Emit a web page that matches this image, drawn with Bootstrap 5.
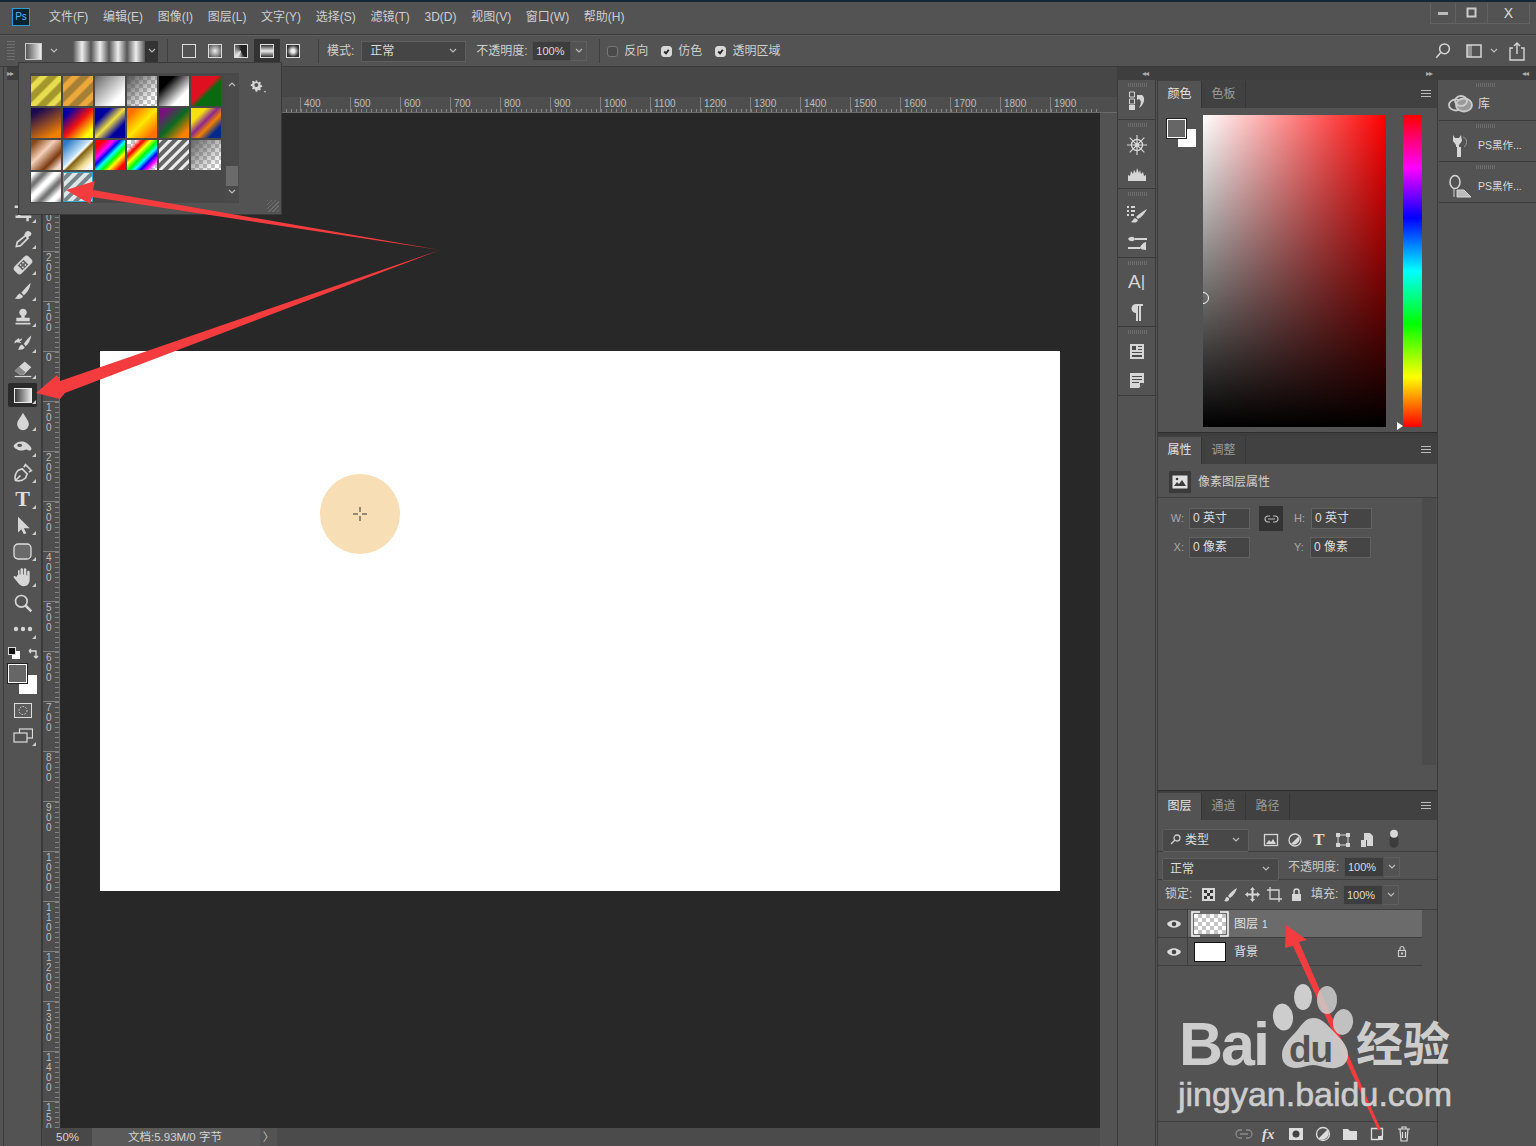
<!DOCTYPE html>
<html lang="zh-CN">
<head>
<meta charset="UTF-8">
<title>Photoshop</title>
<link href="https://cdn.jsdelivr.net/npm/bootstrap@5.3.0/dist/css/bootstrap.min.css" rel="stylesheet">
<style>
:root { --bg:#535353; --dark:#434343; --line:#3a3a3a; --field:#454545; --txt:#cfcfcf; --chk:repeating-conic-gradient(#c4c4c4 0 25%,#fff 0 50%) 0 0/8px 8px; }
html,body { margin:0; height:100%; overflow:hidden; background:var(--bg); }
body { font:12px/1.2 "Liberation Sans","Noto Sans CJK SC",sans-serif; color:var(--txt); }
svg { display:block; flex:none; }
.ic { fill:#d6d6d6; }
.ol { fill:none; stroke:#d6d6d6; stroke-width:2; }
.app { width:1536px; height:1146px; }

/* menu and options */
.menubar { height:34px; flex:none; border-top:2px solid #14283a; padding:0 0 2px 12px; }
.ps-logo { width:18px; height:18px; background:#0a2333; border:1px solid #2e9bd6; color:#4fb6ee; font-size:10px; line-height:16px; text-align:center; margin-right:19px; }
.menubar .menu { gap:14.7px; }
.winbtns { width:100px; height:21px; margin-left:auto; margin-right:6px; margin-bottom:8px; border:1px solid #626262; border-top:0; }
.winbtns div { height:100%; border-right:1px solid #626262; }
.wb1 { width:26px; } .wb2 { width:32px; }
.winbtns .wb3 { width:42px; border:0; color:#ddd; font-size:14px; text-align:center; line-height:20px; }
.optbar { height:33px; flex:none; padding-top:1px; border-top:1px solid var(--line); border-bottom:1px solid var(--line); box-shadow:inset 0 1px #5e5e5e; }
.grip { width:8px; height:20px; margin-left:7px; background:repeating-linear-gradient(to bottom,#707070 0 1px,transparent 1px 3px); }
.opt-div { width:1px; height:24px; background:#3f3f3f; }
.gt { width:26px; height:24px; }
.gt.on { background:#333; }
.gt i { display:block; width:14px; height:14px; border:1px solid #ddd; }
.g-rad { background:radial-gradient(#eee,#444); }
.g-ang { background:conic-gradient(#222 0 40%,#eee 60%,#222); }
.g-ref { background:linear-gradient(#333,#eee,#333); }
.g-dia { background:radial-gradient(#eee 20%,#333 70%); }
.preset { width:17px; height:17px; margin-left:10px; border:1px solid #ccc; background:linear-gradient(90deg,#555,#eee); }
.chev { fill:none; stroke:#bbb; stroke-width:1.2; }
.gradbar { width:72px; height:21px; margin-left:7px; background:repeating-linear-gradient(90deg,#555 0,#eee 9px,#555 18px); }
.gradchev { width:13px; height:21px; background:#333; margin-right:9px; }
.fld { background:var(--field); border:1px solid #5f5f5f; color:#ddd; font-size:12px; padding-left:8px; }
.sel { height:21px; }
.pct { width:39px; height:20px; background:#3d3d3d; border:1px solid #505050; font-size:11px; line-height:18px; padding-left:3px; color:#ddd; }
.pctc { width:16px; height:20px; border:1px solid #5f5f5f; border-left:0; }
.opt-ck { width:11px; height:11px; margin:0 6px 0 0; background-color:#4a4a4a; border:1px solid #777; border-radius:2px; flex:none; }
.opt-ck:checked[type=checkbox] { background-color:#d8d8d8; border-color:#d8d8d8; background-image:url("data:image/svg+xml,<svg xmlns='http://www.w3.org/2000/svg' viewBox='0 0 20 20'><path fill='none' stroke='%23222' stroke-width='4' d='m5 10 4 4 6-8'/></svg>"); }
.opt-mlab { margin-right:7px; }
.opt-mode { width:105px; }
.opt-op { width:52px; margin-left:10px; margin-right:4px; }
.opt-d3 { margin:0 7px 0 4px; }
.opt-l { margin-right:13px; }
.opt-right { padding-right:10px; }
.opt-r1 { margin-left:14px; }
.opt-r2 { margin:0 6px 0 8px; }
.opt-r3 { margin-left:4px; }

/* body of window */
.work { height:1079px; min-height:0; }
.strip { height:13px; background:#3e3e3e; color:#aaa; font-size:8px; line-height:13px; letter-spacing:-1px; }
.tools { width:39px; padding-left:3px; border-left:1px solid var(--line); margin-left:3px; border-right:1px solid #3a3a3a; }
.tool-gap { height:16px; }
.tool { width:29px; height:26px; margin-left:1px; position:relative; }
.tool::after { content:""; position:absolute; right:1px; bottom:3px; border:2px solid transparent; border-right-color:#ccc; border-bottom-color:#ccc; }
.tool.nt::after { display:none; }
.tool.on { background:#2b2b2b; height:24px; margin:1px 0 1px 1px; border-radius:2px; }
.t-txt { font:700 22px/1 "Liberation Serif",serif; color:#ddd; }
.swatch-row { height:22px; margin-left:1px; gap:4px; }
.fgbg { width:29px; height:30px; margin:0 0 3px 1px; }
.fgbg .bg { right:0; bottom:0; width:18px; height:19px; background:#fff; }
.fgbg .fg { left:0; top:0; width:19px; height:19px; background:#666; border:1px solid #fff; outline:1px solid #222; }

/* doc area */
.doc { width:1075px; min-width:0; }
.doctabs { height:30px; background:#474747; flex:none; }
.hruler { height:16px; background:#4e4e4e; color:#bdbdbd; font-size:10px; border-bottom:1px solid #6a6a6a; }
.hruler .corner { width:18px; flex:none; }
.hruler .lead { width:40px; flex:none; }
.hruler .c { width:50px; flex:none; padding-left:3px; line-height:14px; border-left:1px solid #808080; background:repeating-linear-gradient(90deg,#858585 0 1px,transparent 1px 5px) 0 100%/100% 3px no-repeat; }
.doc-mid { min-height:0; }
.vruler { width:18px; flex:none; background:#4e4e4e; color:#bdbdbd; font-size:10px; line-height:10px; overflow:hidden; border-left:1px solid #3a3a3a; border-right:1px solid #6a6a6a; }
.vruler .lead { height:38px; }
.vruler .c { height:50px; padding:1px 0 0 3px; border-top:1px solid #808080; background:repeating-linear-gradient(#858585 0 1px,transparent 1px 5px) 100% 0/4px 100% no-repeat; }
.vruler b { display:block; font-weight:400; }
.pasteboard { background:#282828; padding:238px 0 0 40px; min-width:0; width:1040px; }
.sheet { width:960px; height:540px; background:#fff; }
.dab { left:220px; top:123px; width:80px; height:80px; border-radius:50%; background:#f8deb5; }
.vscroll { flex:1; background:#535353; }
.status { height:18px; background:#535353; color:#d4d4d4; font-size:11.5px; line-height:18px; }
.st-zoom { width:50px; padding-left:14px; background:#484848; }
.st-doc { width:168px; padding-left:36px; background:#5a5a5a; }
.st-go { width:17px; color:#bbb; }
.st-rest { width:823px; background:#4b4b4b; }

/* docks */
.rightside { width:419px; }
.strip-r { padding:0 8px 0 25px; }
.strip-m { margin-left:auto; margin-right:90px; }
.iconrow { min-height:0; }
.dock { width:39px; border-left:1px solid var(--line); border-right:1px solid var(--line); margin-right:1px; flex:none; }
.dock-grp { border-bottom:1px solid #3a3a3a; padding-top:10px; position:relative; }
.dock-grp::before { content:""; position:absolute; left:10px; top:3px; width:19px; height:4px; background:repeating-linear-gradient(90deg,#6d6d6d 0 1px,transparent 1px 2px); }
.dg1 { height:40px; } .dg2 { height:69px; }
.dock-i { height:29px; }
.dk-txt { font-size:19px; color:#d6d6d6; }
.dk-bar { font-size:17px; font-weight:300; }
.panels { width:281px; flex:none; border-left:1px solid var(--line); border-right:1px solid var(--line); }
.ptabs { height:28px; background:#414141; color:#9a9a9a; font-size:12px; flex:none; }
.ptabs .tb { width:44px; text-align:center; line-height:27px; border-right:1px solid #353535; }
.ptabs .tb.on { background:var(--bg); color:#e4e4e4; width:44px; }
.burger { width:10px; height:8px; margin:0 6px 0 auto; background:repeating-linear-gradient(#bbb 0 1px,transparent 1px 3px); }
.sep { height:4px; background:#3d3d3d; flex:none; border-top:1px solid #2f2f2f; }
.sep-thin { height:2px; }
.pcolor { height:324px; padding:7px 0 0 9px; }
.cfg { width:30px; height:30px; margin:4px 6px 0 0; }
.cfg .b { left:11px; top:10px; width:18px; height:18px; background:#fff; }
.cfg .f { left:0; top:0; width:19px; height:19px; background:#666; border:1px solid #fff; outline:1px solid #222; }
.field { width:183px; height:312px; background:linear-gradient(transparent,#000),linear-gradient(90deg,#fff,#f00); margin-right:17px; overflow:hidden; }
.cmark { left:-6px; top:177px; width:12px; height:12px; border:1px solid #fff; border-radius:50%; }
.hue { width:19px; height:312px; background:linear-gradient(#f00,#f0f 17%,#00f 33%,#0ff 50%,#0f0 67%,#ff0 84%,#f00); }
.huemark { left:-6px; bottom:-3px; border:4px solid transparent; border-left:6px solid #fff; border-right:0; }
.pprops { height:354px; }
.prow1 { height:34px; padding:3px 0 0 11px; gap:7px; border-bottom:1px solid #3f3f3f; flex:none; }
.thumbbox { width:22px; height:22px; background:#3a3a3a; }
.prop-body { min-height:0; }
.prop-fields { width:264px; padding-top:6px; color:#a9a9a9; font-size:11px; }
.prop-lane { width:14px; height:267px; background:#4b4b4b; }
.frow { height:29px; }
.frow .lb { width:31px; text-align:right; padding-right:5px; }
.fi { width:61px; height:21px; background:#454545; border:1px solid #626262; padding-left:3px; color:#ddd; font-size:12px; line-height:19px; }
.fi-y { margin-left:-1px; }
.linkb { width:24px; height:25px; background:#333; margin:0 11px 0 9px; }
.hl { width:17px; padding-right:5px; }
.player { min-height:0; flex:1; }
.lr { border-bottom:1px solid #3d3d3d; flex:none; }
.lay-sel { height:23px; background:#484848; border:1px solid #5f5f5f; border-radius:2px; color:#ddd; padding-left:7px; }
.lay-s1 { width:87px; }
.lay-s2 { width:117px; margin-top:4px; }
.filter { height:32px; padding:9px 0 0 4px; }
.filter .ics { margin-left:14px; gap:8px; }
.filter .ics svg { width:16px; height:16px; }
.filter .ics .lay-togg { width:14px; height:20px; margin-top:-2px; }
.lay-t { font-size:17px; line-height:16px; width:16px; text-align:center; }
.blend { height:28px; padding:3px 0 0 4px; }
.lay-op { margin:0 4px 0 9px; color:#c8c8c8; width:52px; }
.lay-pct { width:40px; }
.lockrow { height:30px; padding-left:7px; }
.lockrow > svg { width:15px; height:15px; margin-right:7px; }
.lock-l { width:28px; margin-right:8px; }
.lay-fillt { margin-right:4px; width:28px; }
.lrow { width:264px; height:28px; border-bottom:1px solid #3d3d3d; flex:none; }
.lrow.sel-l .ltext { background:#6b6b6b; }
.eye { width:30px; height:100%; padding-left:2px; border-right:1px solid #3d3d3d; }
.ltext { flex:1; height:100%; padding-left:6px; color:#e0e0e0; }
.ltext span { padding-top:2px; }
.lth { width:32px; height:20px; margin-right:8px; position:relative; }
.lth.ck { background:var(--chk); }
.lth.wh { background:#fff; border:1px solid #111; }
.brk { position:absolute; left:-3px; top:-3px; }
.lnum { font-size:10px; margin-left:4px; }
.lock-bg { margin-right:14px; }
.lfoot { height:25px; border-top:1px solid #3d3d3d; flex:none; margin-top:auto; padding-left:77px; gap:9px; }
.lfoot svg { width:18px; height:18px; }
.lf-fx { width:16px; font:italic 700 15px/18px "Liberation Serif",serif; color:#ddd; }
.rdock { flex:1; margin-left:1px; }
.rd { height:41px; border-bottom:1px solid var(--line); padding:8px 0 0 9px; gap:5px; position:relative; font-size:10.5px; color:#d8d8d8; }
.rd::before { content:""; position:absolute; left:37px; top:3px; width:19px; height:4px; background:repeating-linear-gradient(90deg,#6d6d6d 0 1px,transparent 1px 2px); }
.rd svg { width:25px; height:25px; }
.rd-lib { font-size:12px; }

/* gradient popup */
.gpop { left:18px; top:62px; width:264px; height:153px; background:#535353; border:1px solid #3a3a3a; padding:10px 0 0 11px; }
.gwell { width:209px; height:130px; background:#484848; padding:3px 0 0 1px; }
.ggrid { display:grid; grid-template-columns:repeat(6,30px); grid-auto-rows:30px; gap:2px; width:190px; }
.sb { width:14px; height:126px; margin-left:4px; background:#4a4a4a; }
.sb .thumb { height:20px; width:12px; margin:78px 0 0 1px; background:#6a6a6a; }
.sb svg { margin:6px 0 0 3px; }
.sb .thumb + svg { margin-top:3px; }
.gear { margin:6px 0 0 11px; }
.corner-g { right:2px; bottom:2px; width:12px; height:12px; background:repeating-linear-gradient(135deg,#6d6d6d 0 1px,transparent 1px 3px); }
.s1 { background:repeating-linear-gradient(135deg,#a3962b 0 5px,#e8dc50 7px 11px,#a3962b 13px); }
.s2 { background:repeating-linear-gradient(135deg,#a57f35 0 5px,#eca83a 7px 11px,#a57f35 13px); }
.s3 { background:linear-gradient(135deg,#666,#fff 75%); }
.s4 { background:linear-gradient(135deg,#555,transparent 80%),var(--chk); }
.s5 { background:linear-gradient(135deg,#000 25%,#fff 72%); }
.s6 { background:linear-gradient(135deg,#e01020 45%,#0a6a10 58%); }
.s7 { background:linear-gradient(150deg,#1c0a50 15%,#f08000 85%); }
.s8 { background:linear-gradient(135deg,#0000a8 15%,#f01010 50%,#ffff00 85%); }
.s9 { background:linear-gradient(135deg,#0000a0 25%,#f0e040 50%,#0000a0 75%); }
.s10 { background:linear-gradient(135deg,#ff7000 15%,#ffe800 50%,#ff7000 85%); }
.s11 { background:linear-gradient(135deg,#7a1080 15%,#0a6a20 50%,#ff8000 85%); }
.s12 { background:linear-gradient(135deg,#f5e010 25%,#8a2a90 45%,#f08000 60%,#002a90 80%); }
.s13 { background:linear-gradient(135deg,#8a4a18 10%,#f5d0b8 40%,#7a3a10 70%,#f5d8c8 90%); }
.s14 { background:linear-gradient(135deg,#2a7ac8 10%,#c8e4f8 45%,#fff 49%,#806010 55%,#f0dc90 75%,#fff 90%); }
.s15 { background:linear-gradient(135deg,#f00 15%,#f0f 32%,#00f 42%,#0ff 52%,#0f0 62%,#ff0 72%,#f00 88%); }
.s16 { background:linear-gradient(135deg,transparent 15%,#f00 28%,#ff0 40%,#0f0 52%,#0ff 62%,#00f 72%,#f0f 82%,transparent 92%),var(--chk); }
.s17 { background:repeating-linear-gradient(135deg,#eee 0 2px,#666 3px 6px,#eee 7px); }
.s18 { background:linear-gradient(135deg,#666,transparent 85%),var(--chk); }
.s19 { background:repeating-linear-gradient(135deg,#fff 0 3px,#777 9px 11px,#fff 17px); }
.s20 { background:repeating-linear-gradient(135deg,#dfe6e8 0 3px,#76858a 4px 7px,#dfe6e8 8px); outline:1px solid #3ea6c8; outline-offset:-1px; }

/* overlays */
.overlay { left:0; top:0; pointer-events:none; }
.wm { color:#cdcdcd; white-space:nowrap; pointer-events:none; }
.wm-bai { left:1179px; top:1009px; font:700 61px/70px "Liberation Sans",sans-serif; letter-spacing:-2px; }
.wm-du { left:1289px; top:1031px; font:700 37px/37px "Liberation Sans",sans-serif; color:#535353; letter-spacing:-1px; }
.wm-jy { left:1178px; top:1074px; font-size:34px; line-height:40px; -webkit-text-stroke:.6px #cdcdcd; }
.wm-cn { left:1356px; top:1018px; font-size:47px; line-height:54px; font-weight:700; }
</style>
</head>
<body>
<div class="app position-relative d-flex flex-column">

  <!-- title + menu -->
  <div class="menubar d-flex align-items-center">
    <div class="ps-logo flex-shrink-0">Ps</div>
    <div class="menu d-flex">
      <span>文件(F)</span><span>编辑(E)</span><span>图像(I)</span><span>图层(L)</span><span>文字(Y)</span><span>选择(S)</span><span>滤镜(T)</span><span>3D(D)</span><span>视图(V)</span><span>窗口(W)</span><span>帮助(H)</span>
    </div>
    <div class="winbtns d-flex align-items-center">
      <div class="wb1 d-flex align-items-center justify-content-center"><svg width="10" height="4"><rect y="1" width="10" height="3" fill="#bbb"/></svg></div>
      <div class="wb2 d-flex align-items-center justify-content-center"><svg width="11" height="11"><rect x="1.5" y="1.5" width="8" height="8" fill="none" stroke="#ccc" stroke-width="2"/></svg></div>
      <div class="wb3">X</div>
    </div>
  </div>

  <!-- options bar -->
  <div class="optbar d-flex align-items-center">
    <div class="grip"></div>
    <div class="preset"></div>
    <svg class="chev mx-2" width="8" height="6" viewBox="0 0 8 6"><path d="m1 1 3 3 3-3"/></svg>
    <div class="gradbar"></div>
    <div class="gradchev d-flex align-items-center justify-content-center"><svg class="chev" width="8" height="6" viewBox="0 0 8 6"><path d="m1 1 3 3 3-3"/></svg></div>
    <div class="opt-div me-1"></div>
    <div class="d-flex ms-1 me-2">
      <div class="gt d-flex align-items-center justify-content-center"><i class="bg-transparent"></i></div>
      <div class="gt d-flex align-items-center justify-content-center"><i class="g-rad"></i></div>
      <div class="gt d-flex align-items-center justify-content-center"><i class="g-ang"></i></div>
      <div class="gt on d-flex align-items-center justify-content-center"><i class="g-ref"></i></div>
      <div class="gt d-flex align-items-center justify-content-center"><i class="g-dia"></i></div>
    </div>
    <div class="opt-div ms-1 me-2"></div>
    <span class="opt-mlab">模式:</span>
    <div class="fld sel d-flex align-items-center justify-content-between pe-2 opt-mode">正常<svg class="chev" width="8" height="6" viewBox="0 0 8 6"><path d="m1 1 3 3 3-3"/></svg></div>
    <span class="opt-op">不透明度:</span>
    <div class="pct">100%</div>
    <div class="pctc d-flex align-items-center justify-content-center me-2"><svg class="chev" width="8" height="6" viewBox="0 0 8 6"><path d="m1 1 3 3 3-3"/></svg></div>
    <div class="opt-div opt-d3"></div>
    <input class="form-check-input opt-ck mt-0" type="checkbox"><span class="opt-l">反向</span>
    <input class="form-check-input opt-ck mt-0" type="checkbox" checked><span class="opt-l">仿色</span>
    <input class="form-check-input opt-ck mt-0" type="checkbox" checked><span>透明区域</span>
    <div class="ms-auto d-flex align-items-center opt-right">
      <svg class="ol" width="18" height="18" viewBox="0 0 24 24"><circle cx="14" cy="9" r="6.5"/><path d="m9 14-6 7"/></svg>
      <svg class="opt-r1" width="16" height="16" viewBox="0 0 16 16"><path d="M1 2h14v12H1z" fill="none" stroke="#d6d6d6" stroke-width="1.5"/><rect x="1" y="2" width="5" height="12" fill="#d6d6d6" opacity=".5"/></svg>
      <svg class="chev opt-r2" width="8" height="6" viewBox="0 0 8 6"><path d="m1 1 3 3 3-3"/></svg>
      <svg class="ol opt-r3" width="18" height="20" viewBox="0 0 18 20"><path d="M5 7H2v12h14V7h-3M9 13V2M6 5l3-3 3 3" stroke-width="1.4"/></svg>
    </div>
  </div>

  <div class="work d-flex">
    <!-- tools -->
    <div class="tools flex-shrink-0">
      <div class="strip">▸▸</div>
      <div class="tool-gap"></div>
      <div class="tool d-flex align-items-center justify-content-center"></div>
      <div class="tool d-flex align-items-center justify-content-center"></div>
      <div class="tool d-flex align-items-center justify-content-center"></div>
      <div class="tool d-flex align-items-center justify-content-center"></div>
      <div class="tool d-flex align-items-center justify-content-center"><svg class="ic" width="20" height="20" viewBox="0 0 24 24"><path d="M6 2h3v13h13v3h-3v4h-3v-4H3v-3h3V6H2V3h4zM11 6h8v8h-3v-5h-5z"/></svg></div>
      <div class="tool d-flex align-items-center justify-content-center"><svg class="ol" width="20" height="20" viewBox="0 0 24 24"><path d="m15 8 3 3-9 9-5 1 1-5z"/><path d="M13 6l5 5 1-2 2-1c2-2 1-4-1-5s-3-1-5 1l-1 2z" fill="#d6d6d6" stroke="none"/></svg></div>
      <div class="tool d-flex align-items-center justify-content-center"><svg width="20" height="20" viewBox="0 0 24 24"><g transform="rotate(-45 12 12)"><rect x="0" y="6" width="24" height="12" rx="4" fill="#d6d6d6"/><rect x="7" y="8" width="10" height="8" fill="#666"/><circle cx="10" cy="10" r="1" fill="#ddd"/><circle cx="14" cy="10" r="1" fill="#ddd"/><circle cx="10" cy="14" r="1" fill="#ddd"/><circle cx="14" cy="14" r="1" fill="#ddd"/></g></svg></div>
      <div class="tool d-flex align-items-center justify-content-center"><svg class="ic" width="20" height="20" viewBox="0 0 24 24"><path d="M21 2c-3 3-8 8-11 12l3 3c4-3 8-9 8-15zM8 15c-3 1-3 4-6 6 4 1 9 1 10-3z"/></svg></div>
      <div class="tool d-flex align-items-center justify-content-center"><svg class="ic" width="20" height="20" viewBox="0 0 24 24"><path d="M12 2a4.500 4.500 0 0 0-2 8.500V13H4v4h16v-4h-6v-2.500A4.500 4.500 0 0 0 12 2zM3 19h18v2H3z"/></svg></div>
      <div class="tool d-flex align-items-center justify-content-center"><svg class="ic" width="20" height="20" viewBox="0 0 24 24"><path d="M22 3c-3 2-6 6-9 10l2 3c4-3 6-8 7-13zM11 14c-3 0-3 3-5 6 3 0 7 0 8-3zM2 10l5-4 1 2 3-2-1 3-2 1 2 2-6-1-2 2z"/></svg></div>
      <div class="tool d-flex align-items-center justify-content-center"><svg width="20" height="20" viewBox="0 0 24 24"><path d="m14 3 8 7-9 9H8l-6-5z" fill="#d6d6d6"/><path d="m7 9 8 7-3 3H8l-6-5z" fill="#888"/><path d="M2 21h20" stroke="#d6d6d6" stroke-width="1.500"/></svg></div>
      <div class="tool on d-flex align-items-center justify-content-center"><svg width="18" height="15"><defs><linearGradient id="tg"><stop stop-color="#333"/><stop offset="1" stop-color="#eee"/></linearGradient></defs><rect x=".5" y=".5" width="17" height="14" fill="url(#tg)" stroke="#eee"/></svg></div>
      <div class="tool d-flex align-items-center justify-content-center"><svg class="ic" width="20" height="20" viewBox="0 0 24 24"><path d="M12 2c3 6 7 9 7 14a7 7 0 0 1-14 0c0-5 4-8 7-14z"/></svg></div>
      <div class="tool d-flex align-items-center justify-content-center"><svg width="22" height="20" viewBox="0 0 24 24"><path d="M1 10c3-5 11-6 15-3 3 2 7 6 6 8-1 2-3 1-6 0-3 1-8 2-11 0-2-1-5-3-4-5z" fill="#d6d6d6"/><ellipse cx="8" cy="10" rx="3" ry="2" fill="#555"/></svg></div>
      <div class="tool d-flex align-items-center justify-content-center"><svg class="ol" width="20" height="20" viewBox="0 0 24 24"><path d="M3 21c-1-4 0-9 3-12l5-2 6 6-2 5c-3 3-8 4-12 3zm0 0 6-6"/><path d="m13 5 2-3 7 7-3 2" /></svg></div>
      <div class="tool d-flex align-items-center justify-content-center"><span class="t-txt">T</span></div>
      <div class="tool d-flex align-items-center justify-content-center"><svg class="ic" width="20" height="20" viewBox="0 0 24 24"><path d="m6 2 14 14h-7l3 6-3 1-3-6-4 4z"/></svg></div>
      <div class="tool d-flex align-items-center justify-content-center"><svg width="19" height="17"><rect x="1" y="1" width="17" height="15" rx="4" fill="#6a6a6a" stroke="#ddd" stroke-width="1.300"/></svg></div>
      <div class="tool d-flex align-items-center justify-content-center"><svg class="ic" width="20" height="20" viewBox="0 0 24 24"><path d="M6 9V5c0-2 2-2 2 0v4h1V3c0-2 3-2 3 0v6h1V3c0-2 3-2 3 0v7h1V6c0-2 3-2 3 0v9c0 5-3 8-7 8-3 0-5-1-7-4l-5-6c-1-2 1-3 3-1z"/></svg></div>
      <div class="tool nt d-flex align-items-center justify-content-center"><svg class="ol" width="20" height="20" viewBox="0 0 24 24"><circle cx="10" cy="10" r="7"/><path d="m15 15 7 7" stroke-width="3"/></svg></div>
      <div class="tool d-flex align-items-center justify-content-center"><svg class="ic" width="20" height="6" viewBox="0 0 20 6"><circle cx="3" cy="3" r="2.200"/><circle cx="10" cy="3" r="2.200"/><circle cx="17" cy="3" r="2.200"/></svg></div>
      <div class="swatch-row d-flex align-items-center">
        <svg width="12" height="12"><rect x="4" y="4" width="8" height="8" fill="#fff"/><rect x=".5" y=".5" width="7" height="7" fill="#111" stroke="#ddd"/></svg>
        <svg class="ms-1" width="13" height="13" viewBox="0 0 13 13"><path d="M1 4h7v7M1 4l2-2M1 4l2 2M8 11l-2-2M8 11l2-2" fill="none" stroke="#ddd" stroke-width="1.300"/></svg>
      </div>
      <div class="fgbg position-relative"><div class="bg position-absolute"></div><div class="fg position-absolute"></div></div>
      <div class="tool nt d-flex align-items-center justify-content-center"><svg width="18" height="15"><rect x=".5" y=".5" width="17" height="14" fill="#5c5c5c" stroke="#ddd"/><circle cx="9" cy="7.500" r="4" fill="none" stroke="#ddd" stroke-dasharray="1.500 1.500"/></svg></div>
      <div class="tool d-flex align-items-center justify-content-center"><svg width="20" height="16"><rect x="6.500" y="1" width="13" height="9" fill="none" stroke="#ddd" stroke-width="1.200"/><rect x="1" y="5" width="13" height="9" fill="#535353" stroke="#ddd" stroke-width="1.200"/></svg></div>
    </div>

    <!-- document -->
    <div class="doc d-flex flex-column flex-shrink-0">
      <div class="doctabs"></div>
      <div class="hruler d-flex flex-shrink-0 overflow-hidden" id="hruler"><div class="corner"></div><div class="lead"></div></div>
      <div class="doc-mid d-flex flex-grow-1">
        <div class="vruler" id="vruler"><div class="lead"></div></div>
        <div class="pasteboard">
          <div class="sheet position-relative">
            <div class="dab position-absolute d-flex align-items-center justify-content-center">
              <svg width="14" height="14" viewBox="0 0 14 14"><path d="M7 0v5M7 9v5M0 7h5M9 7h5" stroke="#333" stroke-width="1"/></svg>
            </div>
          </div>
        </div>
        <div class="vscroll"></div>
      </div>
      <div class="status d-flex flex-shrink-0">
        <div class="st-zoom flex-shrink-0">50%</div>
        <div class="st-doc flex-shrink-0">文档:5.93M/0 字节</div>
        <div class="st-go flex-shrink-0 d-flex align-items-center justify-content-center">〉</div>
        <div class="st-rest"></div>
      </div>
    </div>

    <!-- right side -->
    <div class="rightside d-flex flex-column flex-shrink-0">
      <div class="strip strip-r d-flex flex-shrink-0"><span>◂◂</span><span class="strip-m">▸▸</span><span>◂◂</span></div>
      <div class="iconrow d-flex flex-grow-1">
        <div class="dock">
          <div class="dock-grp dg1 d-flex justify-content-center"><svg width="18" height="20" viewBox="0 0 18 20"><path d="M1.500 2h5v5h-5zM1.500 9h5v5h-5z" fill="none" stroke="#d6d6d6"/><rect x="1" y="15" width="6" height="5" fill="#d6d6d6"/><path d="M9 5h5c4 3 2 10-3 13 2-4 3-7 0-9l-2 1z" fill="#d6d6d6"/></svg></div>
          <div class="dock-grp dg2">
            <div class="dock-i d-flex align-items-center justify-content-center"><svg width="22" height="22" viewBox="0 0 24 24"><path d="M12 1v22M1 12h22M4 4l16 16M20 4 4 20" stroke="#d6d6d6" stroke-width="1.300"/><circle cx="12" cy="12" r="6" fill="none" stroke="#d6d6d6" stroke-width="1.500"/><circle cx="12" cy="12" r="2.500" fill="#d6d6d6"/></svg></div>
            <div class="dock-i d-flex align-items-center justify-content-center"><svg width="20" height="14" viewBox="0 0 20 14"><path d="M1 14V8l2 1 1-5 2 3 1-4 2 3 1-5 2 5 1-3 1 4 2-2 1 4 2-1v7z" fill="#d6d6d6"/></svg></div>
          </div>
          <div class="dock-grp dg2">
            <div class="dock-i d-flex align-items-center justify-content-center"><svg width="22" height="20" viewBox="0 0 22 20"><path d="M1 2h2v2H1zM5 2h4v2H5zM1 6h2v2H1zM5 6h4v2H5zM1 10h2v2H1zM5 10h3v2H5zM21 5c-4 2-8 5-11 8l2 2c4-2 7-6 9-10zM9 14c-2 1-2 3-4 4 3 1 6 1 7-2z" fill="#d6d6d6"/></svg></div>
            <div class="dock-i d-flex align-items-center justify-content-center"><svg width="20" height="16" viewBox="0 0 20 16"><path d="M8 3h12v2H8zM1 14h12v-2H1zM1 4c2-3 6-3 7 0-1 3-5 3-7 0zM13 13c0-2 4-6 6-6v8c-2 0-6-1-6-2z" fill="#d6d6d6"/></svg></div>
          </div>
          <div class="dock-grp dg2">
            <div class="dock-i d-flex align-items-center justify-content-center dk-txt">A<span class="dk-bar">|</span></div>
            <div class="dock-i d-flex align-items-center justify-content-center"><svg width="14" height="18" viewBox="0 0 14 18"><path d="M6 1h7v2h-2v15H9V3H8v15H6v-8a4.500 4.500 0 0 1 0-9z" fill="#d6d6d6"/></svg></div>
          </div>
          <div class="dock-grp dg2">
            <div class="dock-i d-flex align-items-center justify-content-center"><svg width="16" height="17" viewBox="0 0 16 17"><path d="M1 1h14v15H1z" fill="#d6d6d6"/><path d="M3 3h4v4H3zM9 3h4v1H9zM9 6h4v1H9zM3 9h10v1H3zM3 12h10v2H3z" fill="#4a4a4a"/></svg></div>
            <div class="dock-i d-flex align-items-center justify-content-center"><svg width="16" height="17" viewBox="0 0 16 17"><path d="M1 1h14v10l-5 5H1z" fill="#d6d6d6"/><path d="M3 4h10v1H3zM3 7h10v1H3zM3 10h7v1H3zM11 15v-4h4" fill="#4a4a4a"/></svg></div>
          </div>
        </div>

        <div class="panels d-flex flex-column">
          <div class="ptabs d-flex align-items-center">
            <div class="tb on">颜色</div><div class="tb">色板</div><div class="burger"></div>
          </div>
          <div class="pcolor d-flex flex-shrink-0">
            <div class="cfg position-relative flex-shrink-0"><div class="b position-absolute"></div><div class="f position-absolute"></div></div>
            <div class="field position-relative"><div class="cmark position-absolute"></div></div>
            <div class="hue position-relative"><div class="huemark position-absolute"></div></div>
          </div>
          <div class="sep"></div>
          <div class="pprops d-flex flex-column flex-shrink-0">
            <div class="ptabs d-flex align-items-center">
              <div class="tb on">属性</div><div class="tb">调整</div><div class="burger"></div>
            </div>
            <div class="prow1 d-flex align-items-center">
              <div class="thumbbox d-flex align-items-center justify-content-center"><svg width="16" height="14" viewBox="0 0 16 14"><rect x=".5" y=".5" width="15" height="13" fill="#e0e0e0"/><path d="M2 11l3-4 2 2 3-4 4 6z" fill="#3a3a3a"/><circle cx="5" cy="4" r="1.300" fill="#3a3a3a"/></svg></div>
              <span>像素图层属性</span>
            </div>
            <div class="prop-body d-flex">
              <div class="prop-fields">
                <div class="frow d-flex align-items-center"><span class="lb">W:</span><div class="fi">0 英寸</div><div class="linkb d-flex align-items-center justify-content-center"><svg width="15" height="8" viewBox="0 0 15 8"><path d="M6 1H4a3 3 0 0 0 0 6h2M9 1h2a3 3 0 0 1 0 6H9M4 4h7" fill="none" stroke="#bbb" stroke-width="1.200"/></svg></div><span class="hl">H:</span><div class="fi">0 英寸</div></div>
                <div class="frow d-flex align-items-center"><span class="lb">X:</span><div class="fi">0 像素</div><div class="linkb invisible"></div><span class="hl">Y:</span><div class="fi fi-y">0 像素</div></div>
              </div>
              <div class="prop-lane"></div>
            </div>
          </div>
          <div class="sep sep-thin"></div>
          <div class="player d-flex flex-column">
            <div class="ptabs d-flex align-items-center">
              <div class="tb on">图层</div><div class="tb">通道</div><div class="tb">路径</div><div class="burger"></div>
            </div>
            <div class="filter lr d-flex align-items-center">
              <div class="lay-sel d-flex align-items-center justify-content-between pe-2 lay-s1"><span class="d-flex align-items-center"><svg class="me-1" width="11" height="11" viewBox="0 0 11 11"><circle cx="7" cy="4" r="3" fill="none" stroke="#ccc" stroke-width="1.300"/><path d="M5 6 1 10" stroke="#ccc" stroke-width="1.500"/></svg>类型</span><svg class="chev" width="8" height="6" viewBox="0 0 8 6"><path d="m1 1 3 3 3-3"/></svg></div>
              <div class="ics d-flex align-items-center">
                <svg viewBox="0 0 16 16"><rect x="1.500" y="2.500" width="13" height="11" fill="none" stroke="#d6d6d6" stroke-width="1.300"/><path d="M3 12l3-4 2 2 2-3 3 5z" fill="#d6d6d6"/></svg>
                <svg viewBox="0 0 16 16"><circle cx="8" cy="8" r="6" fill="none" stroke="#d6d6d6" stroke-width="1.300"/><path d="M12 4A6 6 0 0 1 4 12z" fill="#d6d6d6"/></svg>
                <span class="t-txt lay-t">T</span>
                <svg viewBox="0 0 16 16"><path d="M3 3h10v10H3z" fill="none" stroke="#d6d6d6"/><path d="M1 1h4v4H1zM11 1h4v4h-4zM1 11h4v4H1zM11 11h4v4h-4z" fill="#d6d6d6"/></svg>
                <svg viewBox="0 0 16 16"><path d="M5 1h6l3 3v10H8V8H5zM2 8h5v7H2z" fill="#d6d6d6"/></svg>
                <svg class="ms-1 lay-togg" viewBox="0 0 16 22"><rect x="3" y="6" width="10" height="15" rx="5" fill="#3c3c3c"/><circle cx="8" cy="5" r="4.500" fill="#d8d8d8"/></svg>
              </div>
            </div>
            <div class="blend lr d-flex align-items-center">
              <div class="lay-sel d-flex align-items-center justify-content-between pe-2 lay-s2">正常<svg class="chev" width="8" height="6" viewBox="0 0 8 6"><path d="m1 1 3 3 3-3"/></svg></div>
              <span class="lay-op">不透明度:</span>
              <div class="pct lay-pct">100%</div><div class="pctc d-flex align-items-center justify-content-center"><svg class="chev" width="8" height="6" viewBox="0 0 8 6"><path d="m1 1 3 3 3-3"/></svg></div>
            </div>
            <div class="lockrow lr d-flex align-items-center">
              <span class="lock-l">锁定:</span>
              <svg viewBox="0 0 15 15"><rect x="1" y="1" width="13" height="13" fill="#d6d6d6"/><path d="M3 3h3v3H3zM9 3h3v3H9zM6 6h3v3H6zM3 9h3v3H3zM9 9h3v3H9z" fill="#333"/></svg>
              <svg viewBox="0 0 15 15"><path d="M14 1C10 3 7 6 5 9l2 2c3-2 6-6 7-10zM4 10c-2 0-1 3-3 4 3 1 6 0 5-3z" fill="#d6d6d6"/></svg>
              <svg viewBox="0 0 15 15"><path d="M7.500 0 10 3H8.500v3.500H12V5l3 2.500L12 10V8.500H8.500V12H10l-2.500 3L5 12h1.500V8.500H3V10L0 7.500 3 5v1.500h3.500V3H5z" fill="#d6d6d6"/></svg>
              <svg viewBox="0 0 15 15"><path d="M3 0v12h12M0 3h12v12" fill="none" stroke="#d6d6d6" stroke-width="1.300"/></svg>
              <svg viewBox="0 0 15 15"><path d="M3 7h9v7H3z" fill="#d6d6d6"/><path d="M5 7V4.500a2.500 2.500 0 0 1 5 0V7" fill="none" stroke="#d6d6d6" stroke-width="1.500"/></svg>
              <span class="lay-fillt">填充:</span>
              <div class="pct lay-pct">100%</div><div class="pctc d-flex align-items-center justify-content-center"><svg class="chev" width="8" height="6" viewBox="0 0 8 6"><path d="m1 1 3 3 3-3"/></svg></div>
            </div>
            <div class="lrow sel-l d-flex align-items-center">
              <div class="eye d-flex align-items-center justify-content-center"><svg width="14" height="10" viewBox="0 0 14 10"><path d="M0 5c3-5 11-5 14 0-3 5-11 5-14 0z" fill="#ddd"/><circle cx="7" cy="5" r="2.300" fill="#444"/></svg></div>
              <div class="ltext d-flex align-items-center">
                <div class="lth ck"><svg class="brk" width="38" height="26"><path d="M9 1H1v24h8M29 1h8v24h-8" fill="none" stroke="#fff" stroke-width="1.500"/></svg></div>
                <span>图层</span><span class="lnum">1</span>
              </div>
            </div>
            <div class="lrow d-flex align-items-center">
              <div class="eye d-flex align-items-center justify-content-center"><svg width="14" height="10" viewBox="0 0 14 10"><path d="M0 5c3-5 11-5 14 0-3 5-11 5-14 0z" fill="#ddd"/><circle cx="7" cy="5" r="2.300" fill="#444"/></svg></div>
              <div class="ltext d-flex align-items-center">
                <div class="lth wh"></div>
                <span>背景</span>
                <svg class="ms-auto lock-bg" width="12" height="13" viewBox="0 0 12 13"><path d="M2.500 5.500h7v6h-7z" fill="none" stroke="#ccc" stroke-width="1.200"/><path d="M4 5V3.500a2 2 0 0 1 4 0V5" fill="none" stroke="#ccc" stroke-width="1.200"/><rect x="5" y="7.500" width="2" height="2" fill="#ccc"/></svg>
              </div>
            </div>
            <div class="lfoot d-flex align-items-center">
              <svg viewBox="0 0 18 18"><path d="M7 5H5a4 4 0 0 0 0 8h2M11 5h2a4 4 0 0 1 0 8h-2M5 9h8" fill="none" stroke="#8a8a8a" stroke-width="1.300"/></svg>
              <span class="lf-fx">fx</span>
              <svg viewBox="0 0 18 18"><rect x="2" y="3" width="14" height="12" fill="#ddd"/><circle cx="9" cy="9" r="3.500" fill="#444"/></svg>
              <svg viewBox="0 0 18 18"><circle cx="9" cy="9" r="6.500" fill="none" stroke="#ddd" stroke-width="1.300"/><path d="M13.500 4.500A6.500 6.500 0 0 1 4.500 13.500z" fill="#ddd"/></svg>
              <svg viewBox="0 0 18 18"><path d="M2 4h5l2 2h7v9H2z" fill="#ddd"/></svg>
              <svg viewBox="0 0 18 18"><path d="M3.500 3.500h11v7l-4 4h-7z" fill="none" stroke="#ddd" stroke-width="1.300"/><path d="M10 11h5v4h-5z" fill="#ddd"/></svg>
              <svg viewBox="0 0 18 18"><path d="M3 4h12M7 4V2h4v2M5 4l1 12h6l1-12M7.500 7v6M10.500 7v6" fill="none" stroke="#ddd" stroke-width="1.200"/></svg>
            </div>
          </div>
        </div>

        <div class="rdock d-flex flex-column">
          <div class="rd d-flex align-items-center"><svg viewBox="0 0 25 25"><ellipse cx="8" cy="13" rx="7" ry="5.500" fill="none" stroke="#ccc" stroke-width="1.800"/><ellipse cx="16" cy="13" rx="8" ry="6.500" fill="#999" stroke="#ccc" stroke-width="1.800"/><ellipse cx="13" cy="9" rx="6" ry="5" fill="none" stroke="#ccc" stroke-width="1.800"/></svg><span class="rd-lib">库</span></div>
          <div class="rd d-flex align-items-center"><svg viewBox="0 0 25 25"><path d="M5 2l2 3 4 0 2-3 1 6-3 4v2h-3v-2L5 8z" fill="#d6d6d6"/><rect x="9" y="14" width="4" height="10" fill="#d6d6d6"/><path d="M15 4c4 1 5 7 1 10" fill="none" stroke="#999"/></svg><span>PS黑作...</span></div>
          <div class="rd d-flex align-items-center"><svg viewBox="0 0 25 25"><ellipse cx="7" cy="8" rx="5" ry="6.500" fill="none" stroke="#d6d6d6" stroke-width="1.500"/><path d="M6 14v9M9 16h7l7 7H9z" fill="#bbb" stroke="#d6d6d6"/></svg><span>PS黑作...</span></div>
        </div>
      </div>
    </div>
  </div>

  <!-- gradient preset popup -->
  <div class="gpop position-absolute d-flex">
    <div class="gwell d-flex">
      <div class="ggrid">
        <div class="s1"></div><div class="s2"></div><div class="s3"></div><div class="s4"></div><div class="s5"></div><div class="s6"></div>
        <div class="s7"></div><div class="s8"></div><div class="s9"></div><div class="s10"></div><div class="s11"></div><div class="s12"></div>
        <div class="s13"></div><div class="s14"></div><div class="s15"></div><div class="s16"></div><div class="s17"></div><div class="s18"></div>
        <div class="s19"></div><div class="s20"></div>
      </div>
      <div class="sb">
        <svg class="chev" width="8" height="6" viewBox="0 0 8 6"><path d="m1 4 3-3 3 3"/></svg>
        <div class="thumb"></div>
        <svg class="chev" width="8" height="6" viewBox="0 0 8 6"><path d="m1 1 3 3 3-3"/></svg>
      </div>
    </div>
    <svg class="gear" width="18" height="16" viewBox="0 0 18 16"><path d="M7 1h2l.5 2 1.500.7 1.800-1 1.400 1.400-1 1.800.7 1.500 2 .5v2l-2 .5-.7 1.500 1 1.800-1.400 1.400-1.800-1-1.500.7-.5 2H7l-.5-2L5 12.600l-1.800 1-1.400-1.400 1-1.800L2 9 0 8.500v-2l2-.5.7-1.500-1-1.800 1.400-1.400 1.800 1L6.500 3z" transform="scale(.72) translate(1 1)" fill="#d6d6d6"/><circle cx="6.300" cy="6" r="2" fill="#535353"/><path d="m14 12 2 0-1 2z" fill="#ccc"/></svg>
    <div class="corner-g position-absolute"></div>
  </div>

  <!-- red arrows from the tutorial, then the watermark -->
  <svg class="overlay position-absolute" width="1536" height="1146">
    <g fill="#f43c3f">
      <polygon points="66,190 95,181 93,190 440,250 92,197 90,204"/>
      <polygon points="36,393 57,375 60,381 440,250 65,393 60,399"/>
      <polygon points="1286,925 1307,940 1299,942 1381,1130 1378,1130 1293,946 1285,948"/>
    </g>
    <g fill="#cdcdcd">
      <ellipse cx="1283" cy="1017" rx="10" ry="13.500" transform="rotate(-8 1283 1017)"/>
      <ellipse cx="1303" cy="997" rx="9" ry="13"/>
      <ellipse cx="1327" cy="1000" rx="10" ry="14" opacity=".85"/>
      <ellipse cx="1343" cy="1022" rx="10" ry="13" opacity=".9" transform="rotate(8 1343 1022)"/>
      <path d="M1313 1018c10 0 15 8 22 15 8 8 13 14 13 22 0 10-9 14-18 13-6 0-11-3-17-3s-10 3-17 3c-9 0-14-5-14-13 0-8 5-14 12-21 7-7 10-16 19-16z" opacity=".95"/>
    </g>
  </svg>
  <div class="wm wm-bai position-absolute">Bai</div>
  <div class="wm wm-du position-absolute">du</div>
  <div class="wm wm-cn position-absolute">经验</div>
  <div class="wm wm-jy position-absolute">jingyan.baidu.com</div>
</div>

<script>
var h = document.getElementById('hruler');
for (var i = 0; i <= 19; i++) {
  var c = document.createElement('div');
  c.className = 'c';
  c.textContent = i ? i * 100 : '0';
  h.appendChild(c);
}
var v = document.getElementById('vruler');
var vals = [400, 300, 200, 100, 0];
for (var j = 100; j <= 1500; j += 100) vals.push(j);
vals.forEach(function (n) {
  var c = document.createElement('div');
  c.className = 'c';
  c.innerHTML = String(n).split('').map(function (d) { return '<b>' + d + '</b>'; }).join('');
  v.appendChild(c);
});
</script>
<script src="https://cdn.jsdelivr.net/npm/bootstrap@5.3.0/dist/js/bootstrap.bundle.min.js"></script>
</body>
</html>
